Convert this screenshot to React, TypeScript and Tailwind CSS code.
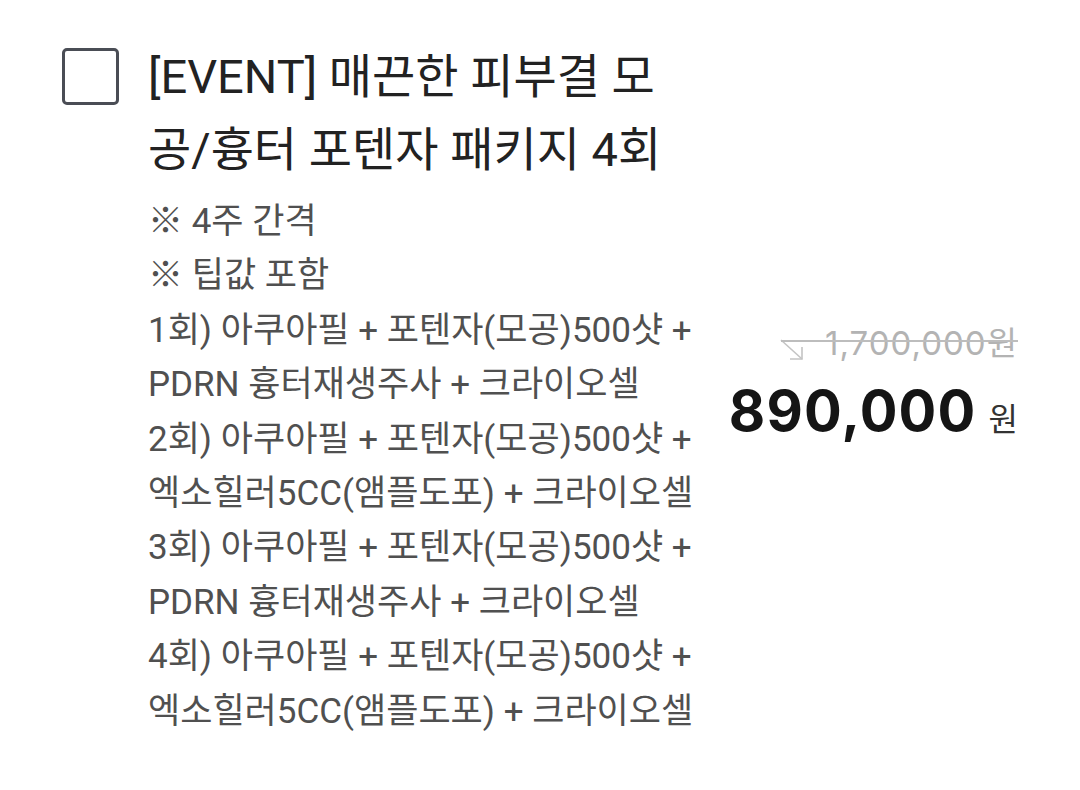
const notes = [
  '※ 4주 간격',
  '※ 팁값 포함',
  '1회) 아쿠아필 + 포텐자(모공)500샷 +',
  'PDRN 흉터재생주사 + 크라이오셀',
  '2회) 아쿠아필 + 포텐자(모공)500샷 +',
  '엑소힐러5CC(앰플도포) + 크라이오셀',
  '3회) 아쿠아필 + 포텐자(모공)500샷 +',
  'PDRN 흉터재생주사 + 크라이오셀',
  '4회) 아쿠아필 + 포텐자(모공)500샷 +',
  '엑소힐러5CC(앰플도포) + 크라이오셀',
];

function ArrowDownRight() {
  return (
    <svg width="26" height="24" viewBox="0 0 26 24" fill="none" stroke="#c4c4c4" strokeWidth="1.6">
      <path d="M2 2 L23 21" />
      <path d="M23 9 V21 H11" />
    </svg>
  );
}

export default function App() {
  return (
    <div
      className="min-h-[790px] w-[1080px] bg-white"
      style={{ fontFamily: 'Roboto, "Noto Sans CJK KR", sans-serif' }}
    >
      <div className="flex items-start pl-[62px] pr-[62px] pt-[48px]">
        <div className="h-[57px] w-[57px] shrink-0 rounded-[5px] border-[3px] border-[#4a4d55]" />

        <div className="ml-[29px] mt-[-8px] flex-1">
          <h2 className="text-[47px] leading-[73px] text-[#222]">
            [EVENT] 매끈한 피부결 모
            <br />
            공/흉터 포텐자 패키지 4회
          </h2>
          <div className="mt-[9px] text-[35px] leading-[54.4px] text-[#505050]">
            {notes.map((line, i) => (
              <p key={i}>{line}</p>
            ))}
          </div>
        </div>

        <div className="mt-[277px] flex flex-col items-end">
          <div className="relative flex items-center pl-[46px]">
            <span className="absolute left-0 top-[13px]">
              <ArrowDownRight />
            </span>
            <span className="absolute left-[2px] right-0 top-[15px] h-[1.6px] bg-[#bdbdbd]" />
            <span
              className="text-[33px] leading-[36px] tracking-[1px] text-[#b3b3b3]"
              style={{ fontFamily: 'Inter, "Noto Sans CJK KR", sans-serif' }}
            >
              1,700,000원
            </span>
          </div>
          <div className="mt-[18px] flex items-baseline">
            <span
              className="text-[56px] font-bold leading-[64px] tracking-[1.2px] text-[#151515]"
              style={{ fontFamily: 'Inter, sans-serif' }}
            >
              890,000
            </span>
            <span className="ml-[12px] text-[32px] text-[#333]">원</span>
          </div>
        </div>
      </div>
    </div>
  );
}
